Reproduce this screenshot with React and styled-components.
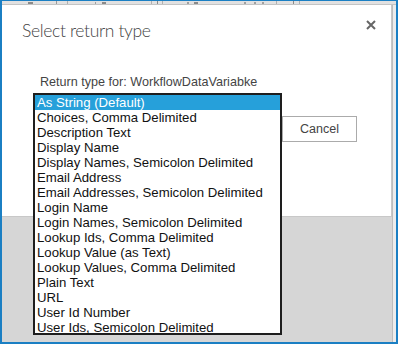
import styled, { createGlobalStyle } from "styled-components";

const GlobalStyle = createGlobalStyle`
  html, body {
    margin: 0;
    padding: 0;
    background: #ffffff;
  }
`;

const Frame = styled.div`
  position: relative;
  width: 398px;
  height: 344px;
  box-sizing: border-box;
  border: 2px solid #1b7fc3;
  border-top-width: 1px;
  display: flex;
  flex-direction: column;
  background: #d6d6d6;
  overflow: hidden;
`;

const TopStrip = styled.div`
  height: 3px;
  background: #e1e1e1;
  border-bottom: 1px solid #c4c4c4;
  display: flex;
  align-items: flex-end;
  flex-shrink: 0;
`;

const Tick = styled.span`
  margin-left: ${(p) => p.$at}px;
  width: ${(p) => p.$w}px;
  height: ${(p) => p.$h || 2}px;
  background: ${(p) => p.$c || "#8a8a8a"};
`;

const Body = styled.div`
  flex: 1;
  display: flex;
`;

const Stage = styled.div`
  flex: 1;
  display: flex;
  flex-direction: column;
`;

const Scroll = styled.div`
  width: 3px;
  border-left: 1px solid #bdbdbd;
  background: #ececec;
`;

const Dialog = styled.div`
  height: 212px;
  background: #ffffff;
  border-bottom: 1px solid #c8c8c8;
  border-right: 1px solid #c8c8c8;
  box-sizing: border-box;
  padding: 15px 14px 0 20px;
  font-family: "Liberation Sans", Arial, sans-serif;
`;

const Header = styled.div`
  display: flex;
  justify-content: space-between;
  align-items: flex-start;
`;

const Title = styled.h1`
  margin: 0;
  font-family: Lato, "Open Sans", sans-serif;
  font-weight: 300;
  font-size: 17.5px;
  letter-spacing: -0.35px;
  line-height: 22px;
  color: #444444;
`;

const Close = styled.button`
  border: none;
  background: none;
  padding: 0;
  margin: 0 1px 0 0;
  width: 10px;
  height: 10px;
  display: flex;
`;

const Label = styled.div`
  margin: 33px 0 0 18px;
  font-size: 12.6px;
  color: #444444;
`;

const Actions = styled.div`
  display: flex;
  justify-content: flex-end;
  padding-right: 20px;
  margin-top: 27px;
`;

const Button = styled.button`
  width: 75px;
  height: 26px;
  background: #ffffff;
  border: 1px solid #ababab;
  font-family: "Liberation Sans", Arial, sans-serif;
  font-size: 12.5px;
  color: #444444;
  padding: 0;
`;

const ListBox = styled.ul`
  position: absolute;
  left: 31px;
  top: 92px;
  width: 249px;
  height: 242px;
  box-sizing: border-box;
  margin: 0;
  padding: 0;
  list-style: none;
  background: #ffffff;
  border: 2px solid #1e1e1e;
  font-family: "Liberation Sans", Arial, sans-serif;
  font-size: 13.2px;
  color: #111111;
`;

const Option = styled.li`
  height: 15px;
  line-height: 15px;
  padding-left: 2px;
  white-space: nowrap;
  background: ${(p) => (p.$selected ? "#26a0da" : "transparent")};
  color: ${(p) => (p.$selected ? "#ffffff" : "#111111")};
`;

const options = [
  "As String (Default)",
  "Choices, Comma Delimited",
  "Description Text",
  "Display Name",
  "Display Names, Semicolon Delimited",
  "Email Address",
  "Email Addresses, Semicolon Delimited",
  "Login Name",
  "Login Names, Semicolon Delimited",
  "Lookup Ids, Comma Delimited",
  "Lookup Value (as Text)",
  "Lookup Values, Comma Delimited",
  "Plain Text",
  "URL",
  "User Id Number",
  "User Ids, Semicolon Delimited",
];

export default function App() {
  return (
    <>
      <GlobalStyle />
      <Frame>
        <TopStrip>
          <Tick $at={26} $w={5} />
          <Tick $at={23} $w={1} $h={4} $c="#9a9a9a" />
          <Tick $at={10} $w={1} $h={4} $c="#b0b0b0" />
          <Tick $at={27} $w={1} $c="#a0a0a0" />
          <Tick $at={6} $w={4} />
          <Tick $at={45} $w={1} $h={4} $c="#b0b0b0" />
          <Tick $at={5} $w={1} $h={4} $c="#8a8a8a" />
          <Tick $at={4} $w={1} $h={4} $c="#b0b0b0" />
          <Tick $at={24} $w={2} $c="#a0a0a0" />
          <Tick $at={5} $w={4} />
          <Tick $at={46} $w={2} $c="#a0a0a0" />
          <Tick $at={8} $w={2} $c="#a0a0a0" />
          <Tick $at={6} $w={2} $c="#a0a0a0" />
          <Tick $at={12} $w={1} $h={4} $c="#b0b0b0" />
          <Tick $at={16} $w={1} $h={4} $c="#8a8a8a" />
          <Tick $at={5} $w={1} $h={4} $c="#b0b0b0" />
        </TopStrip>
        <Body>
          <Stage>
            <Dialog>
              <Header>
                <Title>Select return type</Title>
                <Close aria-label="Close">
                  <svg width="10" height="10" viewBox="0 0 10 10">
                    <path
                      d="M1 1 L9 9 M9 1 L1 9"
                      stroke="#666666"
                      strokeWidth="2"
                    />
                  </svg>
                </Close>
              </Header>
              <Label>Return type for: WorkflowDataVariabke</Label>
              <Actions>
                <Button>Cancel</Button>
              </Actions>
            </Dialog>
          </Stage>
          <Scroll />
        </Body>
        <ListBox role="listbox">
          {options.map((o, i) => (
            <Option key={o} $selected={i === 0}>
              {o}
            </Option>
          ))}
        </ListBox>
      </Frame>
    </>
  );
}
